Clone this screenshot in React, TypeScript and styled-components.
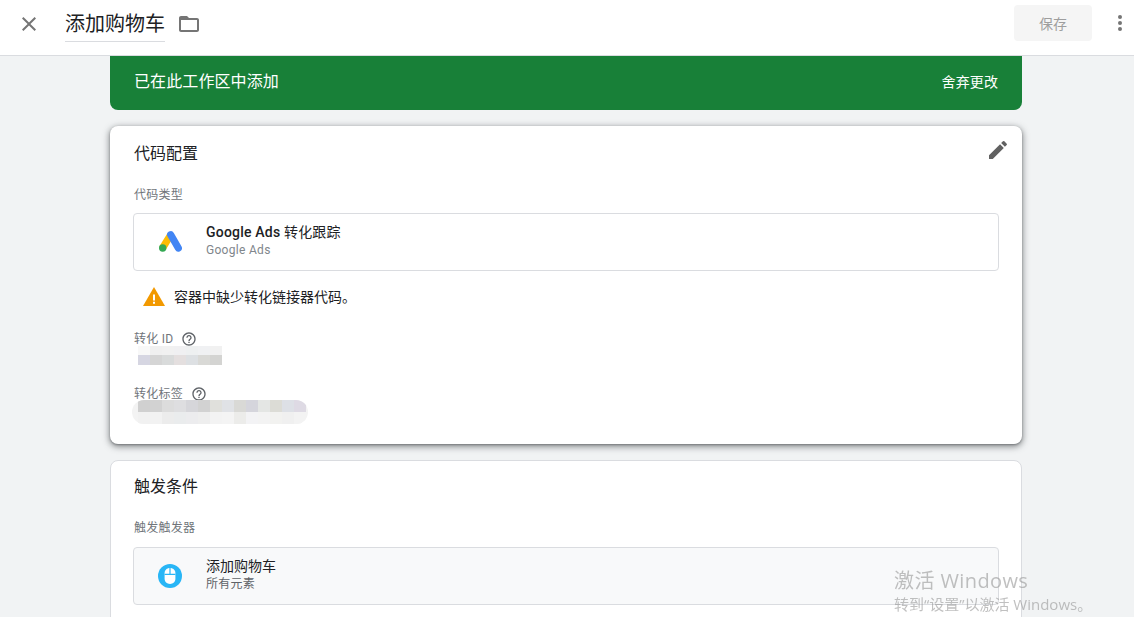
import styled, { createGlobalStyle } from 'styled-components';

const CJK_STACK = `Roboto, "Noto Sans CJK SC", sans-serif`;

const ID_CELLS = [
  ['#f8f8f8', '#f0f0f0', '#f1f1f1', '#f0f0f2', '#eef0f1', '#f0f1f3', '#f1f1f1'],
  ['#d6d6e2', '#d5d5d5', '#d9dbdb', '#e4dfdf', '#dde0e3', '#d9d9d6', '#d4d4d2'],
];

const LABEL_CELLS = [
  ['#d0d0d0', '#d2d2d2', '#dcdcdc', '#dedee0', '#d6d6da', '#d2d2d2', '#e0e0dc', '#e0e2e6', '#d9d9d6', '#d5d5dc', '#e4e6e4', '#dcdcd6', '#dde0e6', '#dedae4'],
  ['#f1f1f1', '#f2f2f2', '#ececec', '#eaeced', '#ececee', '#eeeeee', '#f3f3f3', '#f4f4f4', '#ececea', '#f3f3f5', '#f3f3f3', '#f2f2f0', '#f0f0f0', '#f3f3f3'],
];

const App = () => {
  return (
    <Page>
      <GlobalStyle />
      <Header>
        <CloseButton aria-label="关闭">
          <svg width="24" height="24" viewBox="0 0 24 24" fill="#757575">
            <path d="M19 6.41 17.59 5 12 10.59 6.41 5 5 6.41 10.59 12 5 17.59 6.41 19 12 13.41 17.59 19 19 17.59 13.41 12z" />
          </svg>
        </CloseButton>
        <Title>添加购物车</Title>
        <FolderIcon width="24" height="24" viewBox="0 0 24 24" fill="#757575">
          <path d="M20 6h-8l-2-2H4c-1.1 0-2 .9-2 2v12c0 1.1.9 2 2 2h16c1.1 0 2-.9 2-2V8c0-1.1-.9-2-2-2zm0 12H4V8h16v10z" />
        </FolderIcon>
        <HeaderSpacer />
        <SaveButton>保存</SaveButton>
        <MoreDots>
          <Dot />
          <Dot />
          <Dot />
        </MoreDots>
      </Header>

      <Content>
        <Banner>
          <BannerText>已在此工作区中添加</BannerText>
          <DiscardLink>舍弃更改</DiscardLink>
        </Banner>

        <ActiveCard>
          <CardTitle>代码配置</CardTitle>
          <EditIcon width="24" height="24" viewBox="0 0 24 24" fill="#616161">
            <path d="M3 17.25V21h3.75L17.81 9.94l-3.75-3.75L3 17.25zM20.71 7.04c.39-.39.39-1.02 0-1.41l-2.34-2.34a.996.996 0 0 0-1.41 0l-1.83 1.83 3.75 3.75 1.83-1.83z" />
          </EditIcon>
          <FieldLabel>代码类型</FieldLabel>
          <TypeRow>
            <IconSlot>
              <svg width="24" height="24" viewBox="0 0 24 24">
                <path d="M9.6 2.9 1.4 16.2l6.4 3.6 8-13.4z" fill="#fbbc04" />
                <path d="M12.7 4.7 20.3 18" stroke="#4285f4" strokeWidth="7.2" strokeLinecap="round" />
                <circle cx="4.7" cy="18" r="3.7" fill="#34a853" />
              </svg>
            </IconSlot>
            <TypeText>
              <TypeName>
                <TypeBrand>Google Ads</TypeBrand> 转化跟踪
              </TypeName>
              <TypeSub>Google Ads</TypeSub>
            </TypeText>
          </TypeRow>
          <WarningRow>
            <svg width="24" height="24" viewBox="0 0 24 24">
              <path d="M1 21h22L12 2z" fill="#f29900" />
              <path d="M11 9.5h2v6h-2zM11 16.8h2v2h-2z" fill="#fff" />
            </svg>
            <WarningText>容器中缺少转化链接器代码。</WarningText>
          </WarningRow>
          <ValueLabel>
            转化 ID
            <HelpIcon />
          </ValueLabel>
          <IdMosaic>
            {ID_CELLS.flat().map((color, i) => (
              <MosaicCell key={i} $color={color} />
            ))}
          </IdMosaic>
          <ValueLabelSecond>
            转化标签
            <HelpIcon />
          </ValueLabelSecond>
          <LabelPill>
            <LabelMosaic>
              {LABEL_CELLS.flat().map((color, i) => (
                <MosaicCell key={i} $color={color} />
              ))}
            </LabelMosaic>
          </LabelPill>
        </ActiveCard>

        <Card>
          <CardTitle>触发条件</CardTitle>
          <TriggerLabel>触发触发器</TriggerLabel>
          <TriggerRow>
            <IconSlot>
              <svg width="24" height="24" viewBox="0 0 24 24">
                <circle cx="12" cy="12" r="12" fill="#29b6f6" />
                <path d="M12 4c-3.2 0-5.4 2.2-5.4 5.2v5.600c0 3 2.2 5.200 5.400 5.200s5.400-2.200 5.400-5.200V9.200C17.400 6.200 15.200 4 12 4z" fill="#fff" />
                <path d="M6.600 10.400h10.800M12 4v6.400" stroke="#29b6f6" strokeWidth="1.200" />
              </svg>
            </IconSlot>
            <TypeText>
              <TriggerName>添加购物车</TriggerName>
              <TriggerSub>所有元素</TriggerSub>
            </TypeText>
          </TriggerRow>
        </Card>
      </Content>

      <Watermark>
        <WatermarkTitle>激活 Windows</WatermarkTitle>
        <WatermarkText>转到“设置”以激活 Windows。</WatermarkText>
      </Watermark>
    </Page>
  );
};

const HelpIcon = () => (
  <HelpSvg width="16" height="16" viewBox="0 0 24 24" fill="#5f6368">
    <path d="M11 18h2v-2h-2v2zm1-16C6.48 2 2 6.48 2 12s4.48 10 10 10 10-4.48 10-10S17.52 2 12 2zm0 18c-4.41 0-8-3.59-8-8s3.59-8 8-8 8 3.59 8 8-3.59 8-8 8zm0-14c-2.21 0-4 1.79-4 4h2c0-1.1.9-2 2-2s2 .9 2 2c0 2-3 1.75-3 5h2c0-2.25 3-2.5 3-5 0-2.21-1.79-4-4-4z" />
  </HelpSvg>
);

export default App;

const GlobalStyle = createGlobalStyle`
  html, body {
    margin: 0;
    height: 100%;
    overflow: hidden;
    background: #f1f3f4;
  }
  body {
    font-family: ${CJK_STACK};
    color: #202124;
  }
`;

const Page = styled.div`
  height: 617px;
  overflow: hidden;
  background: #f1f3f4;
`;

const Header = styled.header`
  height: 56px;
  box-sizing: border-box;
  display: flex;
  align-items: center;
  background: #fff;
  border-bottom: 1px solid #dadce0;
  padding: 0 8px 9px 17px;
`;

const CloseButton = styled.div`
  width: 24px;
  height: 24px;
  margin-top: 2px;
  margin-right: 24px;
`;

const Title = styled.div`
  width: 100px;
  height: 34px;
  font-size: 20px;
  line-height: 32px;
  color: #202124;
  border-bottom: 1px solid #dadce0;
  margin-top: 4px;
  box-sizing: border-box;
`;

const FolderIcon = styled.svg`
  margin-left: 12px;
  margin-top: 2px;
`;

const HeaderSpacer = styled.div`
  flex: 1;
`;

const SaveButton = styled.div`
  width: 78px;
  height: 36px;
  border-radius: 4px;
  background: #f5f5f5;
  color: #9e9e9e;
  font-size: 14px;
  line-height: 38px;
  text-align: center;
`;

const MoreDots = styled.div`
  width: 8px;
  margin-left: 24px;
  margin-right: 2px;
  display: flex;
  flex-direction: column;
  align-items: center;
  gap: 2px;
`;

const Dot = styled.span`
  width: 4px;
  height: 4px;
  border-radius: 50%;
  background: #757575;
`;

const Content = styled.main`
  width: 912px;
  margin-left: 110px;
  display: flex;
  flex-direction: column;
  gap: 16px;
`;

const Banner = styled.div`
  height: 54px;
  box-sizing: border-box;
  padding: 0 24px;
  display: flex;
  align-items: center;
  justify-content: space-between;
  background: #188038;
  border-radius: 0 0 8px 8px;
  color: #fff;
`;

const BannerText = styled.div`
  font-size: 16px;
  letter-spacing: 0.1px;
  margin-top: -6px;
`;

const DiscardLink = styled.div`
  font-size: 14px;
  letter-spacing: 0.1px;
  margin-top: -5px;
`;

const Card = styled.section`
  position: relative;
  box-sizing: border-box;
  background: #fff;
  border: 1px solid #dadce0;
  border-radius: 8px;
  padding: 15px 23px 24px;
`;

const ActiveCard = styled(Card)`
  height: 318px;
  border: none;
  padding: 17px 24px 0;
  box-shadow: 0 2px 6px 1px rgba(60, 64, 67, 0.55), 0 1px 2px rgba(60, 64, 67, 0.4);
`;

const CardTitle = styled.h2`
  margin: 0;
  height: 22px;
  font-size: 16px;
  font-weight: 400;
  line-height: 22px;
  color: #202124;
`;

const EditIcon = styled.svg`
  position: absolute;
  top: 12px;
  right: 12px;
`;

const FieldLabel = styled.div`
  margin-top: 22px;
  font-size: 12px;
  line-height: 16px;
  letter-spacing: 0.25px;
  color: #70757a;
`;

const TriggerLabel = styled(FieldLabel)`
  margin-top: 22px;
`;

const TypeRow = styled.div`
  margin: 10px -1px 0;
  height: 58px;
  box-sizing: border-box;
  display: flex;
  align-items: center;
  background: #fff;
  border: 1px solid #dadce0;
  border-radius: 4px;
`;

const TriggerRow = styled(TypeRow)`
  margin-top: 11px;
  background: #f8f9fa;
`;

const IconSlot = styled.div`
  width: 72px;
  display: flex;
  justify-content: center;
  flex: none;
  svg {
    display: block;
  }
`;

const TypeText = styled.div`
  display: flex;
  flex-direction: column;
  margin-top: -2px;
`;

const TypeName = styled.div`
  font-size: 14px;
  line-height: 18px;
  letter-spacing: 0.2px;
  color: #202124;
`;

const TypeBrand = styled.span`
  font-weight: 500;
`;

const TypeSub = styled.div`
  font-size: 12px;
  line-height: 18px;
  letter-spacing: 0.3px;
  color: #80868b;
`;

const TriggerName = styled.div`
  font-size: 14px;
  line-height: 18px;
  color: #202124;
`;

const TriggerSub = styled.div`
  font-size: 12px;
  line-height: 18px;
  letter-spacing: 0.25px;
  color: #5f6368;
`;

const WarningRow = styled.div`
  margin-top: 14px;
  padding-left: 8px;
  height: 24px;
  display: flex;
  align-items: center;
  gap: 8px;
`;

const WarningText = styled.div`
  font-size: 14px;
  margin-top: -2px;
  color: #202124;
`;

const ValueLabel = styled.div`
  margin-top: 22px;
  height: 16px;
  display: flex;
  align-items: center;
  font-size: 12px;
  line-height: 16px;
  letter-spacing: 0.25px;
  color: #70757a;
`;

const ValueLabelSecond = styled(ValueLabel)`
  margin-top: 21px;
`;

const HelpSvg = styled.svg`
  margin-left: 8px;
`;

const IdMosaic = styled.div`
  display: grid;
  width: 84px;
  margin: -1px 0 0 4px;
  grid-template-columns: repeat(7, 12px);
  grid-template-rows: 9px 10px;
`;

const LabelPill = styled.div`
  position: relative;
  width: 176px;
  margin: -2px 0 0 -2px;
  padding: 0 2px 0 6px;
  box-sizing: border-box;
  background: #f3f3f3;
  border-radius: 12px;
  overflow: hidden;
`;

const LabelMosaic = styled.div`
  display: grid;
  width: 168px;
  grid-template-columns: repeat(14, 12px);
  grid-template-rows: 12px 12px;
`;

const MosaicCell = styled.span<{ $color: string }>`
  background: ${({ $color }) => $color};
`;

const Watermark = styled.div`
  position: fixed;
  left: 894px;
  top: 568px;
  color: rgba(150, 150, 150, 0.6);
  font-family: "Open Sans", "Noto Sans CJK SC", sans-serif;
  pointer-events: none;
`;

const WatermarkTitle = styled.div`
  font-size: 20px;
  line-height: 26px;
  letter-spacing: 0.4px;
`;

const WatermarkText = styled.div`
  font-size: 15px;
  line-height: 20px;
  white-space: nowrap;
`;
